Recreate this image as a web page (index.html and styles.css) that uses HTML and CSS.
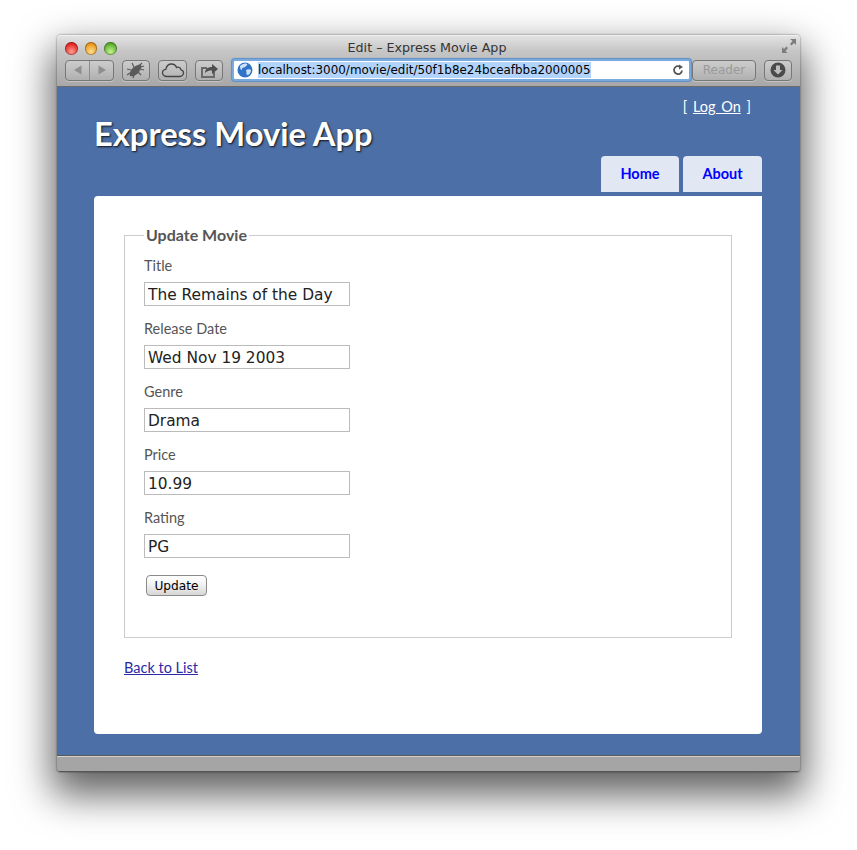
FILE: index.html
```html
<!DOCTYPE html>
<html lang="en">
<head>
    <meta charset="UTF-8">
    <title>Edit - Express Movie App</title>
    <link rel="stylesheet" href="styles.css">
</head>
<body>
    <div class="window">
        <div class="toolbar">
            <div class="titlebar">
                <div class="lights">
                    <span class="light red"></span>
                    <span class="light yellow"></span>
                    <span class="light green"></span>
                </div>
                <div class="window-title">Edit – Express Movie App</div>
                <svg class="fullscreen" width="16" height="16" viewBox="0 0 16 16">
                    <path d="M9 1h6v6l-2-2-2.500 2.500-1.500-1.500L11.500 3z M1 15v-6l2 2 2.500-2.500 1.500 1.500L4.500 13l2 2z" fill="#7d7d7d"/>
                </svg>
            </div>
            <div class="controls">
                <div class="btn nav-btn">
                    <span class="nav-half">
                        <svg width="12" height="12" viewBox="0 0 12 12"><path d="M9.500 1.500v9L2 6z" fill="#8f8f8f"/></svg>
                    </span>
                    <span class="nav-half">
                        <svg width="12" height="12" viewBox="0 0 12 12"><path d="M2.500 1.500v9L10 6z" fill="#8f8f8f"/></svg>
                    </span>
                </div>
                <div class="btn icon-btn bug-btn">
                    <svg width="20" height="18" viewBox="0 0 20 18">
                        <path d="M4 15c-1-3 1-7 4-9s6-3 7-2 0 4-2 7-6 5-9 4z" fill="#5a5a5a"/>
                        <path d="M13 5l3-3M15 6l3-1M8 6L6 2M5 9L1 8M4 12l-3 2M8 14l-1 3M12 11l3 3M14 8l4 1" stroke="#5a5a5a" stroke-width="1.200" fill="none"/>
                    </svg>
                </div>
                <div class="btn icon-btn cloud-btn">
                    <svg width="24" height="16" viewBox="0 0 24 16">
                        <path d="M6 14.500c-2.500 0-4.500-1.500-4.500-3.700 0-2 1.500-3.300 3.300-3.500C5.500 4 8 2 10.500 2c2.500 0 4.300 1.500 5 3.500 0.500-.3 1.200-.4 1.800-.3 1.500.2 2.500 1.300 2.700 2.600 1.500.3 2.500 1.500 2.500 3 0 2-1.500 3.700-3.800 3.700z" fill="none" stroke="#444" stroke-width="1.300"/>
                    </svg>
                </div>
                <div class="btn icon-btn share-btn">
                    <svg width="20" height="16" viewBox="0 0 20 16">
                        <path d="M2 5h6v2H4v7h10v-4h2v6H2z" fill="#6a6a6a"/>
                        <path d="M6 11c0-4 3-6 7-6V2l6 5-6 5V8.500c-3 0-5 .5-7 2.500z" fill="#4e4e4e"/>
                    </svg>
                </div>
                <div class="url-bar">
                    <svg class="globe" width="16" height="16" viewBox="0 0 16 16">
                        <circle cx="8" cy="8" r="7.500" fill="#2f74c9"/>
                        <path d="M3 4c2-2 5-3 7-2 1 1-1 2-2 3s-3 0-3 2-2 1-2-3z M9 8c2-1 4-1 5 0 0 3-2 5-4 5-1-1 0-2-1-5z" fill="#cfe3f7"/>
                    </svg>
                    <span class="url-text">localhost:3000/movie/edit/50f1b8e24bceafbba2000005</span>
                    <svg class="reload" width="12" height="12" viewBox="0 0 12 12">
                        <path d="M10 6.500A4 4 0 1 1 8.500 3" fill="none" stroke="#555" stroke-width="1.800"/>
                        <path d="M7 0.500v5l4-2.500z" fill="#555"/>
                    </svg>
                </div>
                <div class="btn reader-btn">Reader</div>
                <div class="btn icon-btn download-btn">
                    <svg width="16" height="16" viewBox="0 0 16 16">
                        <circle cx="8" cy="8" r="7.500" fill="#4a4a4a"/>
                        <path d="M6 3.500h4V8h2.500L8 12.500 3.500 8H6z" fill="#bdbdbd"/>
                    </svg>
                </div>
            </div>
        </div>

        <div class="page">
            <div class="logon">[ <a href="#">Log On</a> ]</div>
            <div class="header">
                <h1>Express Movie App</h1>
                <ul class="menu">
                    <li><a href="#">Home</a></li>
                    <li><a href="#">About</a></li>
                </ul>
            </div>
            <div class="main">
                <form>
                    <fieldset>
                        <legend>Update Movie</legend>
                        <div class="field">
                            <label>Title</label>
                            <input type="text" value="The Remains of the Day">
                        </div>
                        <div class="field">
                            <label>Release Date</label>
                            <input type="text" value="Wed Nov 19 2003">
                        </div>
                        <div class="field">
                            <label>Genre</label>
                            <input type="text" value="Drama">
                        </div>
                        <div class="field">
                            <label>Price</label>
                            <input type="text" value="10.99">
                        </div>
                        <div class="field">
                            <label>Rating</label>
                            <input type="text" value="PG">
                        </div>
                        <button type="button" class="submit">Update</button>
                    </fieldset>
                </form>
                <a class="back" href="#">Back to List</a>
            </div>
        </div>
        <div class="statusbar"></div>
    </div>
</body>
</html>
```

FILE: styles.css
```css
html, body {
    margin: 0;
    height: 850px;
    overflow: hidden;
    background: #fff;
}
body {
    padding: 35px 0 0 57px;
    box-sizing: border-box;
    font-family: Lato, "Noto Sans", sans-serif;
}

/* browser window */
.window {
    width: 743px;
    height: 737px;
    display: flex;
    flex-direction: column;
    border-radius: 4px 4px 3px 3px;
    box-shadow: 0 18px 38px 5px rgba(0, 0, 0, 0.62), 0 0 2px rgba(0, 0, 0, 0.6);
}
.toolbar {
    height: 52px;
    flex: none;
    box-sizing: border-box;
    background: linear-gradient(#e2e2e2, #c6c6c6 30%, #a8a8a8);
    border-top: 1px solid #f0f0f0;
    border-bottom: 1px solid #6b6b6b;
    border-radius: 4px 4px 0 0;
    padding: 0 8px;
}
.titlebar {
    height: 24px;
    display: flex;
    align-items: center;
    position: relative;
}
.lights {
    display: flex;
    gap: 7px;
    width: 52px;
}
.light {
    width: 13px;
    height: 13px;
    border-radius: 50%;
    box-shadow: inset 0 0 0 1px rgba(0, 0, 0, 0.3);
}
.red { background: radial-gradient(circle at 50% 75%, #ff9d90, #e2221f 70%); }
.yellow { background: radial-gradient(circle at 50% 75%, #ffe08a, #e8941a 70%); }
.green { background: radial-gradient(circle at 50% 75%, #c4f48f, #58a82a 70%); }
.window-title {
    flex: 1;
    text-align: center;
    font-family: "DejaVu Sans", sans-serif;
    font-size: 12.700px;
    color: #333;
    padding-right: 55px;
    margin-top: -1px;
}
.fullscreen {
    position: absolute;
    right: -5px;
    top: 2px;
}
.controls {
    display: flex;
    align-items: center;
    height: 22px;
    margin-top: -1px;
}
.btn {
    height: 21px;
    box-sizing: border-box;
    border: 1px solid #777;
    border-radius: 4px;
    background: linear-gradient(rgba(255, 255, 255, 0.22), rgba(255, 255, 255, 0.03));
    box-shadow: 0 1px 0 rgba(255, 255, 255, 0.3);
    display: flex;
    align-items: center;
    justify-content: center;
}
.nav-btn { width: 49px; }
.nav-half {
    flex: 1;
    height: 100%;
    display: flex;
    align-items: center;
    justify-content: center;
}
.nav-half + .nav-half { border-left: 1px solid #8c8c8c; }
.icon-btn { width: 28px; }
.bug-btn { margin-left: 8px; }
.cloud-btn { margin-left: 8px; width: 29px; }
.share-btn { margin-left: 8px; }
.url-bar {
    width: 459px;
    height: 22px;
    margin-left: 9px;
    box-sizing: border-box;
    display: flex;
    align-items: center;
    background: #fff;
    border: 2px solid #79a9dd;
    box-shadow: 0 0 1px 1px #5d8fc7;
    border-radius: 3px;
    padding-left: 3px;
}
.globe { flex: none; }
.url-text {
    margin-left: 5px;
    font-family: "DejaVu Sans", sans-serif;
    font-size: 11.930px;
    line-height: 16px;
    color: #000;
    background: #b2d3fb;
    white-space: nowrap;
}
.reload { margin-left: auto; margin-right: 5px; }
.reader-btn {
    width: 64px;
    margin-left: 1px;
    font-family: "DejaVu Sans", sans-serif;
    font-size: 12px;
    color: #9a9a9a;
}
.download-btn { margin-left: 8px; }

/* page content */
.page {
    flex: 1;
    background: #4b6fa6;
    padding: 0 38px 22px 37px;
    display: flex;
    flex-direction: column;
    min-height: 0;
}
.logon {
    height: 23px;
    padding: 10px 11px 0 0;
    text-align: right;
    font-size: 14.500px;
    line-height: 20px;
    word-spacing: 2px;
    color: #fff;
}
.logon a { color: #fff; }
.header {
    display: flex;
    justify-content: space-between;
    align-items: flex-end;
    height: 76px;
}
h1 {
    margin: -6px 0 0;
    font-size: 32.700px;
    line-height: 40px;
    font-weight: bold;
    color: #fff;
    text-shadow: 1px 1px 2px #111;
    align-self: flex-start;
}
.menu {
    list-style: none;
    margin: 0 0 4px;
    padding: 0;
    display: flex;
    gap: 4px;
}
.menu a {
    display: block;
    width: 78px;
    height: 36px;
    line-height: 36px;
    text-align: center;
    font-size: 14.500px;
    font-weight: bold;
    text-decoration: none;
    color: #0000ff;
    background: #e2e8f3;
    border-radius: 4px 4px 0 0;
}
.menu li:last-child a { width: 79px; }
.main {
    flex: 1;
    background: #fff;
    border-radius: 4px 0 4px 4px;
    padding: 29px 30px 0;
}
fieldset {
    margin: 0;
    height: 413px;
    box-sizing: border-box;
    border: 1px solid #ccc;
    padding: 0 19px;
}
legend {
    padding: 0 2px;
    font-size: 16px;
    line-height: 20px;
    font-weight: bold;
    color: #555;
}
.field { margin-bottom: 13px; }
.field:first-of-type { margin-top: 11px; }
label {
    display: block;
    font-size: 14.500px;
    line-height: 20px;
    margin-bottom: 6px;
    color: #555;
}
input[type="text"] {
    display: block;
    width: 206px;
    height: 24px;
    box-sizing: border-box;
    border: 1px solid #bbb;
    padding: 1px 3px 0;
    font-family: "DejaVu Sans", sans-serif;
    font-size: 15.400px;
    color: #222;
    background: #fff;
}
.submit {
    display: block;
    margin: 17px 0 0 2px;
    width: 61px;
    height: 21px;
    padding: 0;
    border: 1px solid #8a8a8a;
    border-radius: 4px;
    background: linear-gradient(#fff, #f2f2f2 45%, #d6d6d6);
    font-family: "DejaVu Sans", sans-serif;
    font-size: 12.200px;
    color: #000;
}
.back {
    display: inline-block;
    margin-top: 20px;
    font-size: 14.500px;
    line-height: 20px;
    color: #2a2aa8;
}
.statusbar {
    height: 16px;
    flex: none;
    box-sizing: border-box;
    background: #a5a5a5;
    border-top: 1px solid #d2d2ce;
    border-bottom: 1px solid #555;
    box-shadow: 0 -1px 0 #5a5a5a;
    border-radius: 0 0 3px 3px;
}
```
